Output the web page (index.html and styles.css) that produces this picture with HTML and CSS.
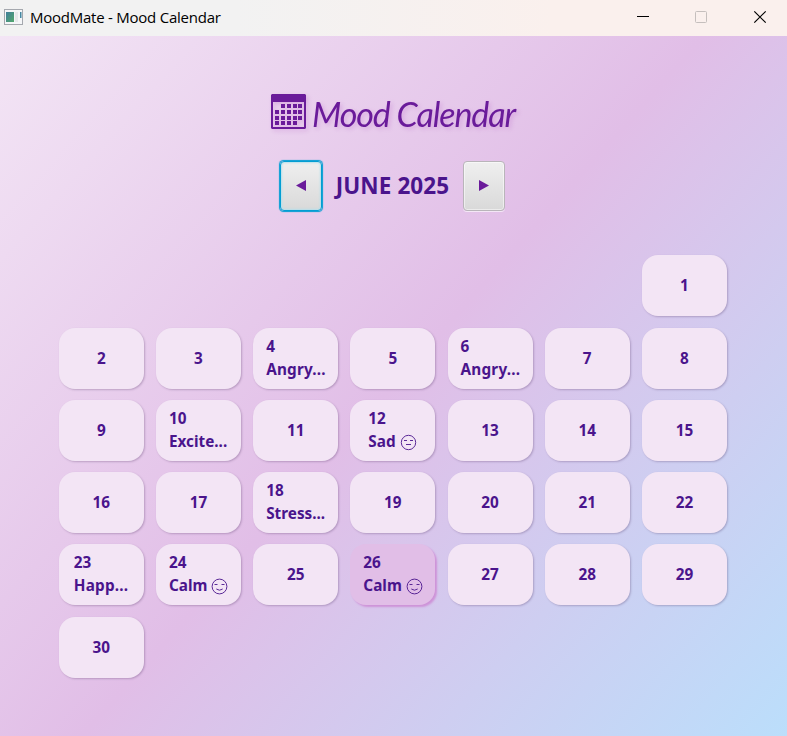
FILE: index.html
```
<!DOCTYPE html>
<html lang="en">
<head>
<meta charset="utf-8">
<title>MoodMate - Mood Calendar</title>
<link rel="stylesheet" href="styles.css">
</head>
<body>
<svg width="0" height="0" class="defs">
  <symbol id="calm" viewBox="0 0 17 17"><circle cx="8.5" cy="8.5" r="7.4"/><path d="M3.5 6.5h3M10.5 6.5h3M5.3 11q3.2 2.4 6.4 0"/></symbol>
  <symbol id="sad" viewBox="0 0 17 17"><circle cx="8.5" cy="8.5" r="7.2"/><path d="M4 6.5h3M10 6.5h3M6 10.5h5"/></symbol>
</svg>
<header class="titlebar">
  <svg class="app-icon" width="20" height="17" viewBox="0 0 20 17">
    <defs><linearGradient id="pane" x1="0" y1="0" x2="1" y2="1"><stop offset="0" stop-color="#417f9b"/><stop offset="1" stop-color="#52a86c"/></linearGradient></defs>
    <path fill="#a5a8ae" d="M0 0h19v16H0z"/><path fill="#f5f6f8" d="M1 1h17v14H1z"/>
    <path fill="url(#pane)" d="M2 3h8v10H2z"/><path fill="#e6e8ea" d="M11 3h3v10h-3z"/><path fill="#4588a2" d="M16 3h1.5v6H16z"/>
  </svg>
  <span class="app-name">MoodMate - Mood Calendar</span>
  <svg class="controls" width="130" height="16" viewBox="0 0 130 16">
    <path d="M0 7.5h12" stroke="#000"/>
    <rect x="58.5" y="2.5" width="11" height="11" rx="1" stroke="#c5bfbd"/>
    <path d="M117.3 2.3l11.4 11.4M128.7 2.3l-11.4 11.4" stroke="#000" stroke-width="1.2"/>
  </svg>
</header>
<main>
  <h1>
    <svg width="36" height="36" viewBox="0 0 36 36">
      <path fill-rule="evenodd" d="M1 0h33l1 1v33l-1 1H1l-1-1V1zM2 8v25h31V8z"/>
      <path d="M10 10h4v4h-4zm6 0h4v4h-4zm6 0h4v4h-4zm5 0h4v4h-4zM4 16h4v4H4zm6 0h4v4h-4zm6 0h4v4h-4zm6 0h4v4h-4zm5 0h4v4h-4zM4 22h4v4H4zm6 0h4v4h-4zm6 0h4v4h-4zm6 0h4v4h-4zm5 0h4v4h-4zM4 27h4v4H4zm6 0h4v4h-4zm6 0h4v4h-4zm6 0h4v4h-4z"/>
    </svg>
    <span>Mood Calendar</span>
  </h1>
  <nav>
    <button class="focused" aria-label="Previous"><svg width="10" height="12"><path d="M10 0v11L0 5.5z"/></svg></button>
    <h2>JUNE 2025</h2>
    <button aria-label="Next"><svg width="10" height="12"><path d="M0 0v11l10-5.5z"/></svg></button>
  </nav>
  <section class="grid">
    <div class="day first">1</div>
    <div class="day">2</div><div class="day">3</div>
    <div class="day mood">4<br><span class="wide">Angry...</span></div>
    <div class="day">5</div>
    <div class="day mood">6<br><span class="wide">Angry...</span></div>
    <div class="day">7</div><div class="day">8</div><div class="day">9</div>
    <div class="day mood">10<br>Excite...</div>
    <div class="day">11</div>
    <div class="day mood sad">12<br>Sad <svg class="face"><use href="#sad"/></svg></div>
    <div class="day">13</div><div class="day">14</div><div class="day">15</div><div class="day">16</div><div class="day">17</div>
    <div class="day mood">18<br>Stress...</div>
    <div class="day">19</div><div class="day">20</div><div class="day">21</div><div class="day">22</div>
    <div class="day mood happy">23<br><span class="wide">Happ...</span></div>
    <div class="day mood">24<br>Calm <svg class="face"><use href="#calm"/></svg></div>
    <div class="day">25</div>
    <div class="day mood today">26<br>Calm <svg class="face"><use href="#calm"/></svg></div>
    <div class="day">27</div><div class="day">28</div><div class="day">29</div><div class="day">30</div>
  </section>
</main>
</body>
</html>
```
FILE: styles.css
```
* { box-sizing: border-box; }
body { margin: 0; height: 736px; overflow: hidden; font-family: "Noto Sans", sans-serif; color: #4a148c; }
.defs { position: absolute; }
.titlebar { height: 36px; display: flex; align-items: center; padding: 0 20px 2px 4px; background: linear-gradient(90deg, #f2f2f2 30%, #faf0ed 70%); color: #000; }
.app-name { font: 15px/20px "Open Sans", sans-serif; letter-spacing: -0.24px; margin-left: 6px; }
.controls { margin-left: auto; fill: none; }
main { height: 700px; padding-top: 58px; background: linear-gradient(131.65deg, #f3e5f5, #e1bee7 50%, #bbdefb); }
h1 { margin: 0 0 0 271px; height: 36px; display: flex; color: #6a1b9a; filter: drop-shadow(2px 2px 2px rgba(186, 104, 200, .35)); }
h1 svg { fill: #6a1b9a; }
h1 span { font: italic 400 34px/39px "Lato", cursive; white-space: nowrap; margin-left: 5px; letter-spacing: -1.1px; }
nav { display: flex; align-items: center; margin: 31px 0 0 280px; height: 50px; width: 225px; justify-content: space-between; }
button { width: 42px; height: 50px; padding: 0; display: grid; place-items: center; border: 1px solid #b9b5ba; border-radius: 4px; background: linear-gradient(#efefef, #d9d9d9); box-shadow: inset 0 0 0 1px rgba(255,255,255,.5), 0 1px 0 rgba(255,255,255,.6); }
button svg { fill: #6a1b9a; }
.focused { border: 1px solid #039ed3; box-shadow: 0 0 1px .6px #039ed3, inset 0 0 2px 1px #b5dfeb; }
h2 { margin: -1px 0 0; font-size: 22.5px; line-height: 30px; white-space: nowrap; letter-spacing: 0.1px; }
.grid { display: grid; grid-template-columns: repeat(7, 85px); grid-auto-rows: 61px; gap: 11.25px 12.2px; margin: 44.4px 0 0 58.8px; }
.day { border-radius: 16px; background: #f3e5f5; box-shadow: 1px 1px 2px rgba(60, 30, 80, .25); display: grid; place-items: center; font-size: 15.3px; font-weight: 700; line-height: 23px; white-space: nowrap; }
.first { grid-column: 7; }
.mood { display: block; padding: 7px 0 0 13px; }
.sad { padding-left: 18px; }
.happy { padding-left: 15px; }
.wide { letter-spacing: 0.2px; }
.today { background: #e1bee7; box-shadow: 2px 2px 2px #ce93d8; }
.face { width: 17px; height: 17px; vertical-align: -4px; fill: none; stroke: #4a148c; stroke-width: 0.9; }
```
